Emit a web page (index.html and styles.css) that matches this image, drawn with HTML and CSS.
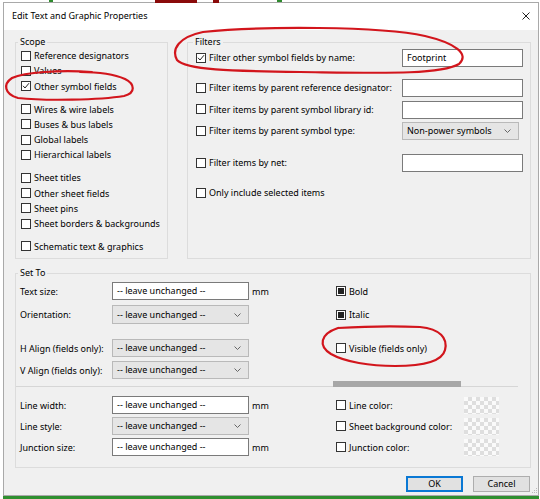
FILE: index.html
```html
<!DOCTYPE html>
<html>
  <head>
    <meta charset="utf-8">
    <title>Edit Text and Graphic Properties</title>
    <link rel="stylesheet" href="styles.css">
  </head>
  <body>
    <div id="screen">
      <div id="window">
        <div id="titlebar">
          <span>Edit Text and Graphic Properties</span>
          <svg class="close" width="8" height="8" viewBox="0 0 8 8"><path d="M0.5 0.5L7.5 7.5M7.5 0.5L0.5 7.5" stroke="#222" stroke-width="1"/></svg>
        </div>
        <div id="dialog">
          <div class="row top">
            <fieldset id="scope">
              <legend>Scope</legend>
              <div class="check"><span class="box"></span>Reference designators</div>
              <div class="check"><span class="box"></span>Values</div>
              <div class="check"><span class="box"><svg width="8" height="8" viewBox="0 0 8 8"><path d="M1 3.8L3 6L7 1.2" fill="none" stroke="#222" stroke-width="1"/></svg></span>Other symbol fields</div>
              <div class="check sep"><span class="box"></span>Wires &amp; wire labels</div>
              <div class="check"><span class="box"></span>Buses &amp; bus labels</div>
              <div class="check"><span class="box"></span>Global labels</div>
              <div class="check"><span class="box"></span>Hierarchical labels</div>
              <div class="check sep"><span class="box"></span>Sheet titles</div>
              <div class="check"><span class="box"></span>Other sheet fields</div>
              <div class="check"><span class="box"></span>Sheet pins</div>
              <div class="check"><span class="box"></span>Sheet borders &amp; backgrounds</div>
              <div class="check sep"><span class="box"></span>Schematic text &amp; graphics</div>
            </fieldset>
            <fieldset id="filters">
              <legend>Filters</legend>
              <div class="filter f1">
                <div class="check"><span class="box"><svg width="8" height="8" viewBox="0 0 8 8"><path d="M1 3.8L3 6L7 1.2" fill="none" stroke="#222" stroke-width="1"/></svg></span>Filter other symbol fields by name:</div>
                <div class="text">Footprint</div>
              </div>
              <div class="filter f2">
                <div class="check"><span class="box"></span>Filter items by parent reference designator:</div>
                <div class="text"></div>
              </div>
              <div class="filter f3">
                <div class="check"><span class="box"></span>Filter items by parent symbol library id:</div>
                <div class="text"></div>
              </div>
              <div class="filter f3">
                <div class="check"><span class="box"></span>Filter items by parent symbol type:</div>
                <div class="select short">Non-power symbols<svg width="7" height="4" viewBox="0 0 7 4"><path d="M0.5 0.5L3.5 3.5L6.5 0.5" fill="none" stroke="#666" stroke-width="1"/></svg></div>
              </div>
              <div class="filter f5">
                <div class="check"><span class="box"></span>Filter items by net:</div>
                <div class="text"></div>
              </div>
              <div class="filter f6">
                <div class="check"><span class="box"></span>Only include selected items</div>
              </div>
            </fieldset>
          </div>

          <fieldset id="setto">
            <legend>Set To</legend>
            <div class="set r1">
              <span>Text size:</span>
              <div class="text">-- leave unchanged --</div>
              <span class="unit">mm</span>
              <div class="check"><span class="box mixed"></span>Bold</div>
            </div>
            <div class="set r2">
              <span>Orientation:</span>
              <div class="select">-- leave unchanged --<svg width="7" height="4" viewBox="0 0 7 4"><path d="M0.5 0.5L3.5 3.5L6.5 0.5" fill="none" stroke="#666" stroke-width="1"/></svg></div>
              <span></span>
              <div class="check"><span class="box mixed"></span>Italic</div>
            </div>
            <div class="set r3">
              <span>H Align (fields only):</span>
              <div class="select">-- leave unchanged --<svg width="7" height="4" viewBox="0 0 7 4"><path d="M0.5 0.5L3.5 3.5L6.5 0.5" fill="none" stroke="#666" stroke-width="1"/></svg></div>
              <span></span>
              <div class="check"><span class="box"></span>Visible (fields only)</div>
            </div>
            <div class="set r4">
              <span>V Align (fields only):</span>
              <div class="select">-- leave unchanged --<svg width="7" height="4" viewBox="0 0 7 4"><path d="M0.5 0.5L3.5 3.5L6.5 0.5" fill="none" stroke="#666" stroke-width="1"/></svg></div>
            </div>
            <div class="divider"><span class="bar"></span></div>
            <div class="set r5">
              <span>Line width:</span>
              <div class="text">-- leave unchanged --</div>
              <span class="unit">mm</span>
              <div class="check"><span class="box"></span>Line color:</div>
              <span class="swatch"></span>
            </div>
            <div class="set r6">
              <span>Line style:</span>
              <div class="select">-- leave unchanged --<svg width="7" height="4" viewBox="0 0 7 4"><path d="M0.5 0.5L3.5 3.5L6.5 0.5" fill="none" stroke="#666" stroke-width="1"/></svg></div>
              <span></span>
              <div class="check"><span class="box"></span>Sheet background color:</div>
              <span class="swatch"></span>
            </div>
            <div class="set r6">
              <span>Junction size:</span>
              <div class="text">-- leave unchanged --</div>
              <span class="unit">mm</span>
              <div class="check"><span class="box"></span>Junction color:</div>
              <span class="swatch"></span>
            </div>
          </fieldset>

          <div id="buttons">
            <button class="btn default">OK</button>
            <button class="btn">Cancel</button>
            <svg class="grip" width="8" height="8" viewBox="0 0 8 8"><g fill="#bbb"><rect x="6" y="2" width="1" height="1"/><rect x="4" y="4" width="1" height="1"/><rect x="6" y="4" width="1" height="1"/><rect x="2" y="6" width="1" height="1"/><rect x="4" y="6" width="1" height="1"/><rect x="6" y="6" width="1" height="1"/></g></svg>
          </div>
        </div>
      </div>
      <div id="desk"></div>

      <svg id="ink" width="540" height="499" viewBox="0 0 540 499">
        <rect x="49" y="0" width="4" height="2" fill="#2e8b2e"/>
        <rect x="155" y="0" width="42" height="3" fill="#8a0a0a"/>
        <rect x="213" y="0" width="6" height="3" fill="#8a0a0a"/>
        <rect x="277" y="0" width="5" height="2" fill="#2e8b2e"/>
        <g fill="none" stroke="#d2151c" stroke-width="2.2" stroke-linecap="round">
          <path d="M203 32 C260 26 380 26 425 36 C455 43 470 54 459 64 C440 75 380 73 300 72 C230 71 186 70 177 60 C171 49 179 37 203 32"/>
          <path d="M92 72 C60 70 25 72 12 78 C3 84 4 94 18 98 C45 101 100 100 124 96 C136 93 135 84 125 79 C114 74 100 72 80 72"/>
          <path d="M338 328 C370 326 400 326 420 327 C440 329 448 338 445 350 C442 362 420 366 395 366 C370 366 345 362 331 354 C318 346 320 334 338 328"/>
        </g>
      </svg>
    </div>
  </body>
</html>
```

FILE: styles.css
```css
* {
    font-family: "Noto Sans", sans-serif;
}

body {
    margin: 0;
    background: #fff;
    color: #000;
    font-size: 9px;
}

#screen {
    position: relative;
    width: 540px;
    height: 499px;
    padding: 2px 1px 0 3px;
    box-sizing: border-box;
    display: flex;
    flex-direction: column;
}

#window {
    height: 494px;
    box-sizing: border-box;
    border: 1px solid #a9a9a9;
    background: #f0f0f0;
    display: flex;
    flex-direction: column;
}

#desk {
    height: 3px;
    background: #2f8f2f;
}

#titlebar {
    height: 27px;
    box-sizing: border-box;
    background: #fff;
    display: flex;
    align-items: center;
    justify-content: space-between;
    padding: 0 8px 2px 8px;
}

#dialog {
    flex: 1;
    padding: 6px 7px 0 11px;
    display: flex;
    flex-direction: column;
}

.row.top {
    display: flex;
    gap: 19px;
}

fieldset {
    margin: 0;
    border: 1px solid #dcdcdc;
    min-width: 0;
    box-sizing: border-box;
}

legend {
    padding: 0 2px;
    margin-left: -3px;
    line-height: 12px;
    height: 12px;
}

#scope {
    flex: none;
    width: 153px;
    padding: 0 0 4px 5px;
}

#filters {
    flex: none;
    width: 344px;
    padding: 0 7px 0 8px;
}

.check {
    display: flex;
    align-items: center;
    gap: 3px;
    height: 15.3px;
    white-space: nowrap;
}

.check.sep {
    margin-top: 7.5px;
}

.box {
    width: 10px;
    height: 10px;
    box-sizing: border-box;
    border: 1px solid #333;
    background: #fff;
    display: flex;
    align-items: center;
    justify-content: center;
    flex: none;
}

.box.mixed::after {
    content: "";
    width: 6px;
    height: 6px;
    background: #222;
}

.filter {
    display: grid;
    grid-template-columns: 1fr 121px;
    align-items: center;
    height: 18px;
}

.f1 { margin-top: 1px; }
.f2 { margin-top: 12px; }
.f3 { margin-top: 3.5px; }
.f5 { margin-top: 14px; }
.f6 { margin-top: 12px; }

.text,
.select {
    height: 18px;
    box-sizing: border-box;
    line-height: 16px;
    white-space: nowrap;
}

.text {
    border: 1px solid #7a7a7a;
    background: #fff;
    padding: 0 4px;
}

.select {
    border: 1px solid #b9b9b9;
    background: #e5e5e5;
    padding: 0 7px 0 4px;
    display: flex;
    align-items: center;
    justify-content: space-between;
}

.select.short {
    width: 117px;
}

#setto {
    margin-top: 8px;
    padding: 0 11px 11px 4px;
}

#setto legend {
    margin-left: -2px;
}

.set {
    display: grid;
    grid-template-columns: 92px 137px 87px 128px 35px;
    align-items: center;
    height: 18px;
    white-space: nowrap;
}

.set.r1 { margin-top: 3px; }
.set.r2 { margin-top: 5px; height: 19px; }
.set.r2 .select { height: 19px; }
.set.r3 { margin-top: 15px; }
.set.r4 { margin-top: 4px; }
.set.r5 { margin-top: 9px; }
.set.r6 { margin-top: 3px; }

.unit {
    padding-left: 3px;
}

.swatch {
    width: 35px;
    height: 17px;
    background: repeating-conic-gradient(#dedede 0 25%, #fafafa 0 50%) 0 0 / 8px 8px;
}

.divider {
    margin: 2px 0 0 -4px;
    width: 502px;
    height: 5px;
    border-bottom: 1px solid #d6d6d6;
    display: flex;
    align-items: flex-start;
}

.bar {
    margin-left: 317px;
    width: 128px;
    height: 6px;
    background: #a7a7a7;
}

#buttons {
    margin: 8px -7px 0 0;
    display: flex;
    justify-content: flex-end;
    align-items: flex-end;
    gap: 10px;
}

.btn {
    width: 57px;
    height: 16px;
    box-sizing: border-box;
    border: 1px solid #adadad;
    background: #e1e1e1;
    font-size: 9px;
    padding: 0;
    line-height: 14px;
    color: #000;
}

.btn.default {
    border: 1px solid #0a78d4;
    box-shadow: inset 0 0 0 1px #0a78d4;
}

.grip {
    margin-left: -10px;
    margin-bottom: -2px;
}

#ink {
    position: absolute;
    left: 0;
    top: 0;
    pointer-events: none;
}
```
